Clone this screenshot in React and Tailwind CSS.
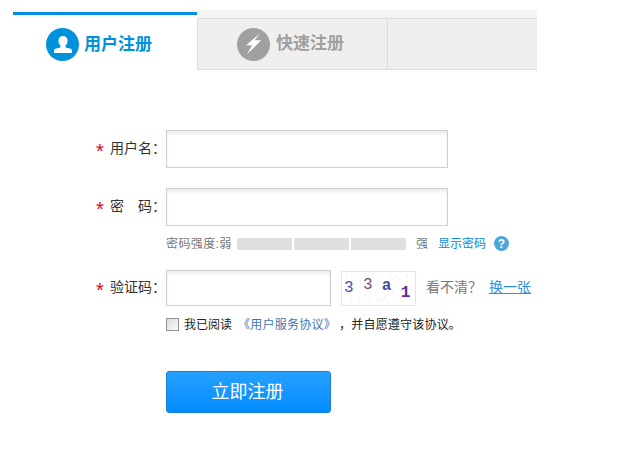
import React from "react";

const FONT = "font-['SimSun','Liberation_Sans','Noto_Sans_CJK_SC',sans-serif]";

const noise = [
  [3, 4], [8, 28], [12, 3], [17, 31], [22, 25], [26, 30], [30, 2], [33, 22], [37, 29], [41, 6],
  [44, 27], [47, 31], [50, 3], [52, 21], [56, 5], [59, 8], [62, 30], [64, 24], [68, 4], [70, 27],
  [18, 9], [28, 26], [36, 18], [46, 12], [54, 28], [66, 13], [71, 18], [6, 22], [40, 31], [60, 25],
];

const Star = () => (
  <span className="w-[14px] pt-[3px] text-[20px] leading-none text-[#e60012] font-['Liberation_Sans',sans-serif]">*</span>
);

const Row = ({ label, children, className }) => (
  <div className={`flex items-center ${className}`}>
    <div className="w-[70px] flex items-center text-[14px] text-[#333]">
      <Star />
      <span className="-mt-[2px]">{label}</span>
    </div>
    {children}
  </div>
);

const TextInput = ({ className }) => (
  <input
    type="text"
    className={`block border border-[#cfcfcf] bg-white shadow-[inset_0_3px_3px_#eeeeee] outline-none ${className}`}
  />
);

const App = () => {
  return (
    <div className={`w-[643px] h-[452px] bg-white overflow-hidden pt-[10px] ${FONT}`}>
      <div className="ml-[13px] w-[524px] h-[60px] flex">
        <div className="w-[184px] pt-[2px]">
          <div className="h-[3px] bg-[#0091dc]" />
          <div className="flex items-center h-[55px] gap-[5px] pl-[33px] pt-[4px]">
            <span className="w-[33px] h-[33px] rounded-full bg-[#0091dc] flex items-center justify-center">
              <svg width="18" height="17" viewBox="0 0 20 19">
                <path
                  fill="#fff"
                  d="M10 0C6.8 0 4.9 2.200 4.900 5.200c0 2.200.8 4 2 5.200.5.6.5 1.700 0 2.200-.9.8-2.700 1.100-4.600 1.500C1 14.400 0 15 0 16.200V19h20v-2.800c0-1.200-1-1.800-2.300-2.100-1.900-.4-3.700-.7-4.600-1.500-.5-.5-.5-1.600 0-2.200 1.200-1.200 2-3 2-5.200C15.100 2.200 13.200 0 10 0z"
                />
              </svg>
            </span>
            <span className="text-[17px] font-bold text-[#0091dc]">用户注册</span>
          </div>
        </div>
        <div className="flex-1 flex flex-col">
          <div className="h-[8px] bg-[#f4f4f4]" />
          <div className="flex-1 flex bg-[#efefef] border-y border-[#dcdcdc]">
            <div className="w-[191px] border-x border-[#dcdcdc] flex items-center gap-[6px] pl-[39px]">
              <span className="w-[33px] h-[33px] rounded-full bg-[#a0a0a0] flex items-center justify-center">
                <svg width="16" height="22" viewBox="0 0 16 22">
                  <path fill="#fff" d="M14.300 0 0 12.300h6L1 21.300 15.300 7.300H8.700z" />
                </svg>
              </span>
              <span className="text-[17px] font-bold text-[#a0a0a0]">快速注册</span>
            </div>
          </div>
        </div>
      </div>

      <div className="pl-[96px] pt-[60px]">
        <Row label="用户名：">
          <TextInput className="w-[282px] h-[38px]" />
        </Row>
        <Row label={<span className="whitespace-pre">密　码：</span>} className="mt-[20px]">
          <TextInput className="w-[282px] h-[38px]" />
        </Row>

        <div className="pl-[70px] mt-[9px] h-[17px] flex items-center text-[12px] text-[#777]">
          <span className="w-[71px] tracking-[0.4px]">密码强度:弱</span>
          <div className="flex gap-[2px]">
            <div className="w-[55px] h-[12px] bg-[#dfdfdf]" />
            <div className="w-[55px] h-[12px] bg-[#dfdfdf]" />
            <div className="w-[55px] h-[12px] bg-[#dfdfdf]" />
          </div>
          <span className="ml-[10px]">强</span>
          <a className="ml-[10px] text-[#0a8bd6]">显示密码</a>
          <span className="ml-[8px] w-[15px] h-[15px] rounded-full bg-[#4ea6d8] text-white text-[12px] font-bold flex items-center justify-center font-['Liberation_Sans',sans-serif]">
            ?
          </span>
        </div>

        <Row label="验证码：" className="mt-[18px]">
          <TextInput className="w-[165px] h-[36px]" />
          <svg width="75" height="35" viewBox="0 0 75 35" className="ml-[10px] border border-[#e4e4e4]">
            {noise.map(([x, y], i) => (
              <rect key={i} x={x} y={y} width="1" height="1" fill="#cccccc" />
            ))}
            <text x="1" y="21" fontSize="17" fontFamily="Liberation Mono" fill="#5a45ad">3</text>
            <text x="21" y="18" fontSize="17" fontFamily="Liberation Mono" fill="#7a4a7a">3</text>
            <text x="41" y="19" fontSize="17" fontFamily="Liberation Mono" fontWeight="bold" fill="#3f4aa5">a</text>
            <text x="61" y="27" fontSize="17" fontFamily="Liberation Mono" fontWeight="bold" fill="#6b2a9a">1</text>
          </svg>
          <span className="ml-[10px] -mt-[2px] text-[14px] text-[#777]">看不清？</span>
          <a className="ml-[7px] -mt-[2px] text-[14px] text-[#2f8fd8] underline">换一张</a>
        </Row>

        <div className="pl-[70px] mt-[10px] h-[17px] flex items-center text-[12px] text-[#222]">
          <span className="w-[13px] h-[13px] border border-[#8f8f8f] bg-gradient-to-br from-[#dcdcdc] to-[#fafafa]" />
          <span className="ml-[5px]">我已阅读</span>
          <a className="ml-[6px] tracking-[0.25px] text-[#3f74b8]">《用户服务协议》</a>
          <span className="ml-[3px] tracking-[0.2px]">，并自愿遵守该协议。</span>
        </div>

        <div className="pl-[70px] mt-[38px]">
          <button className="w-[165px] h-[42px] pr-[2px] rounded-[3px] border border-[#1a7fd0] bg-gradient-to-b from-[#25a0ff] to-[#008cff] text-white text-[18px]">
            立即注册
          </button>
        </div>
      </div>
    </div>
  );
};

export default App;
